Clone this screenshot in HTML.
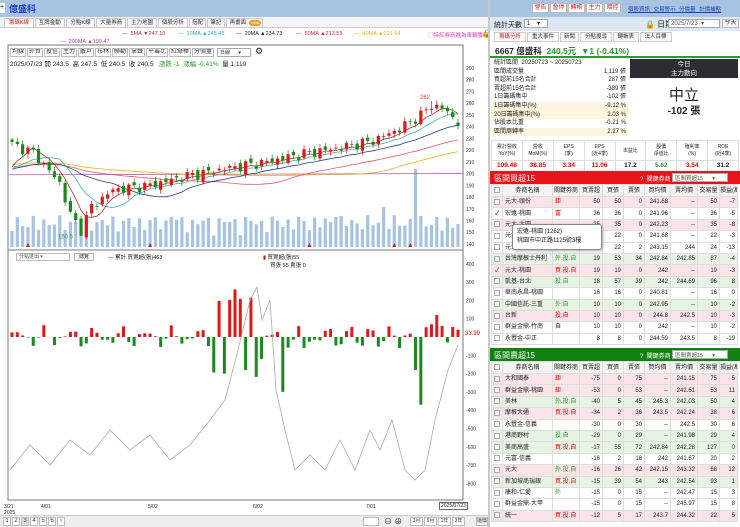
<!DOCTYPE html>
<html><head><meta charset="utf-8">
<style>
*{margin:0;padding:0;box-sizing:border-box}
body{width:740px;height:527px;overflow:hidden;background:#fff;font-family:"Liberation Sans","Noto Sans CJK TC",sans-serif;font-size:7px;color:#222;position:relative}
.a{position:absolute;white-space:nowrap}
.btn{position:absolute;border:1px solid #bbb;background:#f4f4f4;font-size:6px;line-height:9px;text-align:center;color:#333;white-space:nowrap;overflow:hidden}
table{border-collapse:collapse;table-layout:fixed}
td{border:1px solid #ddd;font-size:6px;height:11.4px;line-height:10px;text-align:right;padding:0 2px;overflow:hidden;white-space:nowrap}
td.l{text-align:left}
td.c{text-align:center}
tr.p td{background:#fbe4e7}
tr.g td{background:#e7f4e4}
tr.h td{background:#f3f3f3;text-align:center;height:12px}
.r{color:#e00}.gr{color:#2a9a2a}
.cb{display:inline-block;width:6px;height:6px;border:1px solid #aaa;background:#fff;vertical-align:middle}
</style></head><body>

<div class="a" style="left:0;top:0;width:490px;height:17px;background:#a9c3e3"></div>
<div class="a" style="left:0;top:3px;width:5px;height:10px;background:#fff;font-size:7px;line-height:10px">+</div>
<div class="a" style="left:9px;top:2px;font-size:9px;color:#1a3fbf;font-weight:bold">億盛科</div>
<div class="a" style="left:0;top:17px;width:490px;height:11px;background:#f4f4f4;border-bottom:1px solid #ccc"></div>
<div id="tabs"></div>
<div class="a" style="left:122px;top:31px;font-size:5.5px;color:#b03030">— &nbsp;5MA ▼247.10</div>
<div class="a" style="left:178px;top:31px;font-size:5.5px;color:#3aa">— &nbsp;10MA ▲245.45</div>
<div class="a" style="left:236px;top:31px;font-size:5.5px;color:#224">— &nbsp;20MA ▲234.73</div>
<div class="a" style="left:296px;top:31px;font-size:5.5px;color:#d02040">— &nbsp;60MA ▲213.53</div>
<div class="a" style="left:354px;top:31px;font-size:5.5px;color:#e8b020">— &nbsp;40MA ▲221.94</div>
<div class="a" style="left:60px;top:39px;font-size:5.5px;color:#a040a0">— &nbsp;200MA ▲199.47</div>
<div class="a" style="left:428px;top:31px;font-size:5.5px;color:#e040b0">◯特紅券商進為車輛籌碼</div>
<div class="a" style="left:482px;top:29px;font-size:8px">🔒</div>

<svg class="a" style="left:0;top:0" width="490" height="527" id="ch"></svg>

<div id="tb"></div>
<div class="a" style="left:10px;top:58px;font-size:6.5px">2025/07/23 開 243.5 &nbsp;高 247.5 &nbsp;低 240.5 &nbsp;收 240.5 &nbsp;&nbsp;<span class="gr">漲跌 -1 &nbsp;漲幅 -0.41%</span> &nbsp;量 1,119</div>

<div class="a" style="left:16px;top:253px;width:54px;height:8px;border:1px solid #bbb;font-size:5px;line-height:6px;padding-left:2px;color:#555">分點進出 ▾</div>
<div class="btn" style="left:74px;top:253px;width:20px;height:8px;line-height:6px;font-size:5px">總覽</div>
<div class="a" style="left:108px;top:253px;font-size:5.5px">— 累計 買賣超(張)463</div>
<div class="a" style="left:263px;top:253px;font-size:5.5px"><span class="r">▮</span> 買賣超(張)55</div>
<div class="a" style="left:270px;top:261px;font-size:5.5px">買張 55 賣張 0</div>

<div class="a" style="left:4px;top:504px;font-size:5px;line-height:6px">3/21<br>2025</div>
<div class="a" style="left:41px;top:504px;font-size:5px">4/01</div>
<div class="a" style="left:148px;top:504px;font-size:5px">5/02</div>
<div class="a" style="left:253px;top:504px;font-size:5px">6/02</div>
<div class="a" style="left:366px;top:504px;font-size:5px">7/01</div>
<div class="a" style="left:439px;top:502px;font-size:5px;border:1px solid #666;padding:0 1px">2025/07/23</div>
<div class="a" style="left:0;top:515px;width:490px;height:12px;background:#eee;border-top:1px solid #ccc"></div>
<div id="pg"></div>

<div class="a" style="left:488px;top:0;width:2px;height:527px;background:#c9c9c9"></div>
<div class="a" style="left:490px;top:0;width:250px;height:17px;background:#a9c3e3"></div>
<div id="rb"></div>
<div class="a" style="left:628px;top:5px;font-size:5.5px;color:#1a3fbf;text-decoration:underline;word-spacing:2px">個股資訊 交易警示 分價量 計價補點</div>
<div class="a" style="left:490px;top:17px;width:250px;height:14px;background:#dde7f3"></div>
<div class="a" style="left:494px;top:20px;font-size:7px">統計天數</div>
<div class="a" style="left:524px;top:19px;width:24px;height:9px;border:1px solid #aaa;background:#fff;font-size:6px;padding-left:2px">1 &nbsp;&nbsp;&nbsp;▾</div>
<div class="a" style="left:645px;top:19px;font-size:8px">🔒 日期</div>
<div class="a" style="left:668px;top:19px;width:52px;height:9px;border:1px solid #aaa;background:#fff;font-size:6px;padding-left:2px;color:#555">2025/7/23 &nbsp;▾</div>
<div class="btn" style="left:722px;top:19px;width:17px;height:9px;line-height:7px">今天</div>
<div id="rt"></div>
<div class="a" style="left:490px;top:43px;width:250px;height:15px;border-bottom:2px solid #2a9a2a"></div>
<div class="a" style="left:495px;top:45px;font-size:8.5px;font-weight:bold">6667 億盛科 &nbsp;<span class="gr">240.5元 &nbsp;▼1 (-0.41%)</span></div>

<div id="st"></div>
<div class="a" style="left:630px;top:59px;width:108px;height:19px;background:#2c2c33;color:#fff;font-size:6.5px;text-align:center;line-height:9px;padding-top:1px">今日<br>主力動向</div>
<div class="a" style="left:630px;top:84px;width:108px;text-align:center;font-size:15px">中立</div>
<div class="a" style="left:630px;top:102px;width:108px;text-align:center;font-size:10px;font-weight:bold">-102 張</div>

<div class="a" style="left:491px;top:140px;width:248px">
<table style="width:248px">
<tr><td class="c" style="height:20px;line-height:7px;font-size:5px">累計營收<br>YoY(%)</td><td class="c" style="line-height:7px;font-size:5px">營收<br>MoM(%)</td><td class="c" style="line-height:7px;font-size:5px">EPS<br>(季)</td><td class="c" style="line-height:7px;font-size:5px">EPS<br>(近4季)</td><td class="c" style="font-size:5px">本益比</td><td class="c" style="line-height:7px;font-size:5px">股價<br>淨值比</td><td class="c" style="line-height:7px;font-size:5px">殖利率<br>(%)</td><td class="c" style="line-height:7px;font-size:5px">ROE<br>(近4季)</td></tr>
<tr style="font-weight:bold"><td class="c r" style="font-size:6.5px">109.48</td><td class="c r" style="font-size:6.5px">38.85</td><td class="c r" style="font-size:6.5px">3.34</td><td class="c r" style="font-size:6.5px">11.06</td><td class="c" style="font-size:6.5px">17.2</td><td class="c gr" style="font-size:6.5px">5.62</td><td class="c r" style="font-size:6.5px">3.54</td><td class="c" style="font-size:6.5px">31.2</td></tr>
</table></div>

<div class="a" style="left:490px;top:171px;width:250px;height:13px;background:#e8141b"></div>
<div class="a" style="left:494px;top:173px;font-size:8px;color:#fff">區間買超15</div>
<div class="a" style="left:640px;top:174px;font-size:6px;color:#fff">? &nbsp;關鍵券商</div>
<div class="a" style="left:672px;top:173px;width:56px;height:9px;background:#fff;border:1px solid #aaa;font-size:5.5px;padding-left:2px;color:#555">區間買超15 &nbsp;&nbsp;&nbsp;&nbsp;&nbsp;▾</div>
<div class="a" style="left:491px;top:184px" id="t1"></div>

<div class="a" style="left:512px;top:224px;width:90px;height:26px;background:#fff;border:1px solid #888;border-radius:3px;font-size:6px;line-height:9px;padding:3px 4px;box-shadow:1px 1px 3px #aaa">宏遠-桃園 (1262)<br>桃園市中正路1125號3樓</div>

<div class="a" style="left:490px;top:348px;width:250px;height:13px;background:#128012"></div>
<div class="a" style="left:494px;top:350px;font-size:8px;color:#fff">區間賣超15</div>
<div class="a" style="left:640px;top:351px;font-size:6px;color:#fff">? &nbsp;關鍵券商</div>
<div class="a" style="left:672px;top:350px;width:56px;height:9px;background:#fff;border:1px solid #aaa;font-size:5.5px;padding-left:2px;color:#555">區間賣超15 &nbsp;&nbsp;&nbsp;&nbsp;&nbsp;▾</div>
<div class="a" style="left:491px;top:361px" id="t2"></div>

<script>
function H(id,h){document.getElementById(id).innerHTML=h}
var tabs=["籌碼K線","互牌金動","分點K線","大量券商","主力地圖","個股分析","搭配","筆記","再畫面"],x=4,h="";
tabs.forEach(function(t,i){var w=t.length*6.2+5;if(i==8)w+=14;h+='<div class="a" style="left:'+x+'px;top:18px;width:'+w+'px;height:10px;border:1px solid #ccc;background:'+(i==0?'#fff':'#f7f7f7')+';font-size:5.5px;line-height:9px;text-align:'+(i==8?'left':'center')+';padding-left:'+(i==8?3:0)+'px;color:'+(i==0?'#d02020':'#333')+'">'+t+'</div>';x+=w+1});
h+='<div class="a" style="left:'+(x-15)+'px;top:20px;width:12px;height:6px;border-radius:3px;background:#f0a030;font-size:4px;color:#fff;text-align:center">new</div>';
H("tabs",h);
var tb=["均線","外資","投信","主力","散戶","布林","聯動","掌聲","平籌比","紅綠棒","分價量"];x=10;h="";
tb.forEach(function(t){var w=t.length*6+4;h+='<div class="btn" style="left:'+x+'px;top:48px;width:'+w+'px;height:9px;line-height:7px;background:#fff">'+t+'</div>';x+=w+1});
h+='<div class="a" style="left:'+(x+2)+'px;top:48px;width:34px;height:9px;border:1px solid #aaa;font-size:5px;padding-left:2px">日線 &nbsp;&nbsp;&nbsp;&nbsp;&nbsp;▾</div><div class="a" style="left:'+(x+40)+'px;top:46px;font-size:9px">⚙</div>';
H("tb",h);
h="";for(var i=1;i<=7;i++){h+='<div class="btn" style="left:'+(3+(i-1)*9)+'px;top:517px;width:8px;height:9px;line-height:7px;background:'+(i==3?'#ddd':'#fff')+'">'+(i<7?i:'›')+'</div>'}
h+='<div class="a" style="left:363px;top:517px;width:16px;height:9px;border:1px solid #bbb;background:#fff"></div><div class="a" style="left:384px;top:516px;font-size:8px">⊖ ⊕</div>';
["3月","6月","1年","3年"].forEach(function(t,i){h+='<div class="btn" style="left:'+(410+i*14)+'px;top:517px;width:13px;height:9px;line-height:7px;font-size:5px;background:#fff">'+t+'</div>'});
h+='<div class="btn" style="left:476px;top:517px;width:12px;height:9px;line-height:7px;font-size:5px">還價</div>';
H("pg",h);
h="";["警告","暫停","轉帳","主力","暗控"].forEach(function(t,i){h+='<div class="btn" style="left:'+(532+i*18)+'px;top:3px;width:17px;height:10px;line-height:8px;background:#fff;color:#d02020">'+t+'</div>'});H("rb",h);
h="";x=494;["籌碼分析","重大事件","新聞","分點搜尋","轉帳表","法人目標"].forEach(function(t,i){var w=t.length*6.5+6;h+='<div class="a" style="left:'+x+'px;top:32px;width:'+w+'px;height:10px;border:1px solid #ccc;background:'+(i?'#f7f7f7':'#fff')+';font-size:5.5px;line-height:8px;text-align:center;color:'+(i?'#333':'#d02020')+'">'+t+'</div>';x+=w+1});H("rt",h);
var st=[["統計區間 &nbsp;20250723 ~ 20250723",""],["區間成交量","1,119 張"],["買超前15名合計","287 張"],["賣超前15名合計","-389 張"],["1日籌碼集中","-102 張"],["1日籌碼集中(%)","-9.12 %"],["20日籌碼集中(%)","2.03 %"],["佔股本比重","-0.21 %"],["區間周轉率","2.27 %"]];
h="";st.forEach(function(s,i){var bg=(i==5||i==6||i==8)?'#fdf6dc':'#fff';h+='<div class="a" style="left:492px;top:'+(59+i*8.6)+'px;width:136px;height:8.6px;background:'+bg+';font-size:6px;line-height:8.6px;padding:0 2px">'+s[0]+'<span style="float:right">'+s[1]+'</span></div>'});H("st",h);
var cw=[11,50,27,23,21,21,26,27,22,18];
function tbl(rows,hd){var s='<table style="width:246px">'+'<colgroup>'+cw.map(function(w){return '<col style="width:'+w+'px">'}).join('')+'</colgroup><tr class="h"><td><span class="cb"></span></td>'+hd.map(function(t){return '<td style="text-align:center;padding:0">'+t+'</td>'}).join('')+'</tr>';
rows.forEach(function(r){s+='<tr class="'+r[0]+'"><td class="c">'+(r[1]?'✓':'<span class="cb"></span>')+'</td><td class="l">'+r[2]+'</td><td class="l">'+r[3]+'</td>';for(var k=4;k<11;k++)s+='<td>'+r[k]+'</td>';s+='</tr>'});return s+'</table>'}
var hd=["券商名稱","關鍵券商","買賣超","買張","賣張","買均價","賣均價","交易量","損益(萬)"];
var R='<span class="r">',G='<span class="gr">',E='</span>';
H("t1",tbl([
["p",0,"元大-頭份",R+"鉅"+E,50,50,0,"241.68","--",50,-7],
["",1,"宏遠-桃園",R+"富"+E,36,36,0,"241.96","--",36,-5],
["p",0,"元大-大園","",35,35,0,"242.23","--",35,-8],
["",0,"元大-中壢","",22,22,0,"241.68","--",22,-3],
["",0,"元大-新竹","",20,22,2,"243.15",244,24,-13],
["g",0,"台灣摩根士丹利",G+"外.投.自"+E,19,53,34,"242.84","242.85",87,-4],
["p",1,"元大-桃園",R+"買.投.自"+E,19,19,0,242,"--",19,-3],
["g",0,"凱基-台北",G+"投.自"+E,18,57,39,242,"244.69",96,8],
["",0,"華南永昌-桃園","",16,16,0,"240.81","--",16,0],
["g",0,"中國信託-三重",G+"外.自"+E,10,10,0,"242.95","--",10,-2],
["p",0,"台新",R+"投.自"+E,10,10,0,"244.8","242.5",10,-3],
["",0,"群益金鼎-竹南","自",10,10,0,242,"--",10,-2],
["",0,"永豐金-中正","",8,8,0,"244.59","243.5",8,-19]],hd));
H("t2",tbl([
["p",0,"大和國泰",R+"鉅"+E,-75,0,75,"--","241.15",75,5],
["p",0,"群益金鼎-桃園",R+"鉅"+E,-53,0,53,"--","242.61",53,11],
["g",0,"美林",G+"外.投.自"+E,-40,5,45,"245.3","242.03",50,4],
["p",0,"摩根大通",R+"買.投.自"+E,-34,2,36,"243.5","242.24",38,6],
["",0,"永豐金-信義","",-30,0,30,"--","242.5",30,6],
["g",0,"港商野村",G+"投.自"+E,-29,0,29,"--","241.98",29,4],
["g",0,"美商高盛",R+"買.投.自"+E,-17,55,72,"242.84","242.28",127,0],
["",0,"元富-信義","",-16,2,18,242,"241.67",20,2],
["p",0,"元大",G+"外.投.自"+E,-16,26,42,"242.15","243.32",68,12],
["g",0,"新加坡商瑞銀",R+"買.投.自"+E,-15,39,54,243,"242.54",93,1],
["",0,"康和-仁愛",G+"外"+E,-15,0,15,"--","242.47",15,3],
["",0,"群益金鼎-大甲","",-15,0,15,"--","245.97",15,8],
["p",0,"統一",R+"買.投.自"+E,-12,5,17,"243.7","244.32",22,5]],hd));

var N=85,x0=12,dx=(458-12)/(N-1);
var an=[[0,225],[4,218],[9,192],[11,165],[13,152],[15,172],[19,186],[26,190],[33,198],[40,204],[48,210],[56,218],[62,222],[68,228],[73,238],[77,250],[79,258],[81,256],[83,248],[84,240.5]];
function interp(i){for(var k=0;k<an.length-1;k++){if(i>=an[k][0]&&i<=an[k+1][0]){var t=(i-an[k][0])/(an[k+1][0]-an[k][0]);return an[k][1]+t*(an[k+1][1]-an[k][1])}}return 240}
var C=[],O=[];
for(var i=0;i<N;i++){var c=interp(i)+(i<N-1?Math.sin(i*2.3)*3+Math.cos(i*1.7)*2:0);C.push(c);O.push(i?C[i-1]+Math.sin(i*3.1)*2.5:c+2)}
O[N-1]=243.5;
function py(p){return 68+(290-p)*1.173}
var sv='<rect x="8" y="45" width="455" height="455" fill="none" stroke="#777"/><line x1="8" y1="250" x2="463" y2="250" stroke="#777"/>';
for(var p=290;p>=140;p-=10)sv+='<text x="466" y="'+(py(p)+2)+'" font-size="5" fill="#333">'+p+'</text>';
[400,300,200,100,-100,-200,-300,-400,-500,-600,-700,-800].forEach(function(v){sv+='<text x="466" y="'+(337-v*0.183+2)+'" font-size="5" fill="#333">'+v+'</text>'});
sv+='<text x="465" y="335" font-size="6" fill="#e00">33.99</text>';
for(var i=0;i<N;i++){var x=x0+i*dx,hv=10+Math.abs(Math.sin(i*1.9))*16+Math.abs(Math.cos(i*0.7))*6;
if(i==76)hv=78;if(i==70)hv=40;if(i==61)hv=30;if(i==30)hv=30;if(i==3)hv=20;
sv+='<rect x="'+(x-1.6)+'" y="'+(247-hv)+'" width="3.2" height="'+hv+'" fill="#a6c3e2"/>'}
function ma(n,col){var pts=[];for(var i=0;i<N;i++){var sum=0;for(var k=0;k<n;k++){var j=i-k;sum+=j>=0?C[j]:(200+n*0.2+(j)*0.15)}pts.push((x0+i*dx).toFixed(1)+','+py(sum/n).toFixed(1))}return '<polyline points="'+pts.join(' ')+'" fill="none" stroke="'+col+'" stroke-width="0.8"/>'}
sv+='<line x1="8" y1="'+py(199)+'" x2="463" y2="'+py(200)+'" stroke="#b060b0" stroke-width="0.8"/>';
sv+=ma(60,'#e8b020')+ma(40,'#e85a6a')+ma(20,'#223a8a')+ma(10,'#40b0b0')+ma(5,'#b03030');
for(var i=0;i<N;i++){var x=x0+i*dx,o=O[i],c=C[i],hi=Math.max(o,c)+1.5+Math.abs(Math.sin(i))*2,lo=Math.min(o,c)-1.5-Math.abs(Math.cos(i))*2;
if(i==13)lo=150.5;if(i==79)hi=262;
var col=c>=o?'#e01818':'#1a8a1a';
sv+='<line x1="'+x+'" y1="'+py(hi)+'" x2="'+x+'" y2="'+py(lo)+'" stroke="'+col+'" stroke-width="0.7"/><rect x="'+(x-1.6)+'" y="'+py(Math.max(o,c))+'" width="3.2" height="'+Math.max(0.8,Math.abs(o-c)*1.173)+'" fill="'+col+'"/>'}
sv+='<text x="58" y="'+(py(150.5)+7)+'" font-size="6" fill="#3a9a3a">150.5</text><text x="420" y="'+(py(262)-2)+'" font-size="6" fill="#e04040">262</text>';
[3,26,56,72,75].forEach(function(i){sv+='<path d="M'+(x0+i*dx-2)+' 247 l2 -4 l2 4z" fill="#d02020"/>'});
for(var i=0;i<N;i++){var x=x0+i*dx,v=Math.sin(i*1.3)*40+Math.cos(i*2.1)*25;
if(i>=38&&i<=46)v=(i%2?1:-1)*(80+i*3);if(i==42)v=260;if(i==44)v=-180;if(i==47)v=-120;if(i==51)v=-300;if(i==55)v=-60;if(i==77)v=-370;if(i==76)v=-180;if(i==79)v=70;if(i>=80)v=[120,60,-30,55,40][i-80];
if(i>=64&&i<=74)v=Math.sin(i*1.7)*60;
var y=337,hh=Math.abs(v)*0.183;
sv+='<rect x="'+(x-1.5)+'" y="'+(v>0?y-hh:y)+'" width="3" height="'+hh+'" fill="'+(v>0?'#e01818':'#1a8a1a')+'"/>'}
var gl=[[10,470],[30,445],[50,465],[70,440],[90,455],[110,430],[130,450],[150,435],[170,460],[190,445],[210,420],[225,400],[238,350],[250,300],[257,287],[262,320],[270,300],[276,390],[285,430],[295,470],[310,455],[325,470],[340,440],[355,470],[370,430],[380,450],[392,420],[405,470],[415,480],[425,470],[435,420],[448,370],[458,345]];
sv+='<polyline points="'+gl.map(function(p){return p.join(',')}).join(' ')+'" fill="none" stroke="#aaa" stroke-width="0.8"/>';
document.getElementById("ch").innerHTML=sv;
</script>
</body></html>
